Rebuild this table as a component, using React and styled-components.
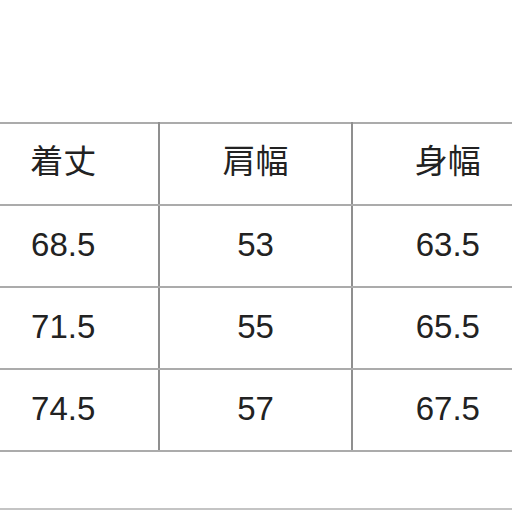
import React from 'react';
import styled, { createGlobalStyle } from 'styled-components';

const GlobalStyle = createGlobalStyle`
  html, body {
    margin: 0;
    padding: 0;
    background: #ffffff;
  }
`;

const Page = styled.div`
  width: 512px;
  height: 512px;
  overflow: hidden;
  padding-top: 122px;
  box-sizing: border-box;
  font-family: 'Liberation Sans', 'Noto Sans CJK JP', sans-serif;
  color: #222;
`;

const Table = styled.table`
  border-collapse: collapse;
  margin-left: -34px;
  width: 579px;
  table-layout: fixed;
`;

const Cell = styled.td`
  height: ${(p) => (p.$head ? '74px' : '77px')};
  padding: 0 0 ${(p) => (p.$head ? '6px' : '3px')} 0;
  border-top: 2px solid #ababab;
  border-bottom: 2px solid #ababab;
  border-left: 2px solid #8f8f8f;
  border-right: 2px solid #8f8f8f;
  text-align: center;
  vertical-align: middle;
  font-size: 33px;
  font-weight: 400;
  line-height: 1;
`;

const Divider = styled.div`
  margin-top: 56px;
  height: 2px;
  background: #c4c4c4;
`;

const headers = ['着丈', '肩幅', '身幅'];
const rows = [
  ['68.5', '53', '63.5'],
  ['71.5', '55', '65.5'],
  ['74.5', '57', '67.5'],
];

export default function App() {
  return (
    <>
      <GlobalStyle />
      <Page>
        <Table>
          <tbody>
            <tr>
              {headers.map((h) => (
                <Cell key={h} $head>
                  {h}
                </Cell>
              ))}
            </tr>
            {rows.map((r, i) => (
              <tr key={i}>
                {r.map((v, j) => (
                  <Cell key={j}>{v}</Cell>
                ))}
              </tr>
            ))}
          </tbody>
        </Table>
        <Divider />
      </Page>
    </>
  );
}
